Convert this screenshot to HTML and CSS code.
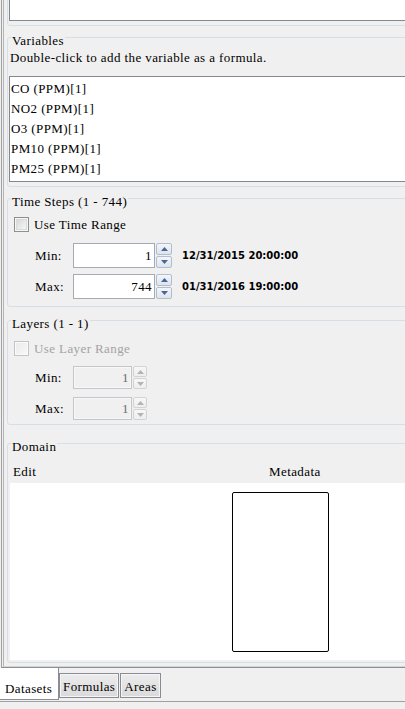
FILE: index.html
```html
<!DOCTYPE html>
<html lang="en">
<head>
<meta charset="utf-8">
<title>Datasets</title>
<link rel="stylesheet" href="styles.css">
</head>
<body>
<div class="window">
  <div class="pane">
    <div class="panel">
      <section class="group group-formula">
        <div class="formula-box"></div>
      </section>

      <section class="group group-vars">
        <div class="group-title">Variables</div>
        <div class="hint">Double-click to add the variable as a formula.</div>
        <ul class="var-list">
          <li>CO (PPM)[1]</li>
          <li>NO2 (PPM)[1]</li>
          <li>O3 (PPM)[1]</li>
          <li>PM10 (PPM)[1]</li>
          <li>PM25 (PPM)[1]</li>
        </ul>
      </section>

      <section class="group group-time">
        <div class="group-title">Time Steps (1 - 744)</div>
        <div class="check-row">
          <span class="checkbox"></span>
          <span class="check-label">Use Time Range</span>
        </div>
        <div class="range-row">
          <span class="range-label">Min:</span>
          <div class="spinner">
            <div class="spin-field">1</div>
            <div class="spin-buttons">
              <span class="spin-btn"><svg width="7" height="4" viewBox="0 0 7 4"><path d="M3.5 0L7 4H0Z"/></svg></span>
              <span class="spin-btn"><svg width="7" height="4" viewBox="0 0 7 4"><path d="M0 0H7L3.5 4Z"/></svg></span>
            </div>
          </div>
          <span class="stamp">12/31/2015 20:00:00</span>
        </div>
        <div class="range-row range-row-next">
          <span class="range-label">Max:</span>
          <div class="spinner">
            <div class="spin-field">744</div>
            <div class="spin-buttons">
              <span class="spin-btn"><svg width="7" height="4" viewBox="0 0 7 4"><path d="M3.5 0L7 4H0Z"/></svg></span>
              <span class="spin-btn"><svg width="7" height="4" viewBox="0 0 7 4"><path d="M0 0H7L3.5 4Z"/></svg></span>
            </div>
          </div>
          <span class="stamp">01/31/2016 19:00:00</span>
        </div>
      </section>

      <section class="group group-layers">
        <div class="group-title">Layers (1 - 1)</div>
        <div class="check-row">
          <span class="checkbox disabled"></span>
          <span class="check-label disabled-text">Use Layer Range</span>
        </div>
        <div class="range-row small">
          <span class="range-label">Min:</span>
          <div class="spinner disabled">
            <div class="spin-field">1</div>
            <div class="spin-buttons">
              <span class="spin-btn"><svg width="7" height="4" viewBox="0 0 7 4"><path d="M3.5 0L7 4H0Z"/></svg></span>
              <span class="spin-btn"><svg width="7" height="4" viewBox="0 0 7 4"><path d="M0 0H7L3.5 4Z"/></svg></span>
            </div>
          </div>
        </div>
        <div class="range-row small range-row-next">
          <span class="range-label">Max:</span>
          <div class="spinner disabled">
            <div class="spin-field">1</div>
            <div class="spin-buttons">
              <span class="spin-btn"><svg width="7" height="4" viewBox="0 0 7 4"><path d="M3.5 0L7 4H0Z"/></svg></span>
              <span class="spin-btn"><svg width="7" height="4" viewBox="0 0 7 4"><path d="M0 0H7L3.5 4Z"/></svg></span>
            </div>
          </div>
        </div>
      </section>

      <section class="group group-domain">
        <div class="group-title">Domain</div>
        <div class="domain-head">
          <span>Edit</span>
          <span>Metadata</span>
        </div>
        <div class="domain-body">
          <div class="meta-box"></div>
        </div>
      </section>
    </div>
  </div>

  <div class="tabs">
    <div class="tab selected">Datasets</div>
    <div class="tab first">Formulas</div>
    <div class="tab">Areas</div>
  </div>
</div>
</body>
</html>
```

FILE: styles.css
```css
* {
  box-sizing: border-box;
}

html,
body {
  margin: 0;
  padding: 0;
}

body {
  width: 405px;
  height: 709px;
  overflow: hidden;
  background: #f0f0f0;
  color: #000;
  font-family: "Liberation Serif", "Times New Roman", serif;
  font-size: 13px;
  line-height: 15px;
  letter-spacing: 0.4px;
}

.window {
  width: 470px;
}

/* tabbed pane content area */
.pane {
  margin-left: 1px;
  padding-left: 1px;
  border-left: 1px solid #a0a0a0;
  border-bottom: 1px solid #8e8f8f;
}

.panel {
  padding: 0 0 3px 3px;
  border-left: 1px solid #b4b4b4;
  border-bottom: 1px solid #d4d4d4;
}

/* group boxes */
.group {
  padding: 0 0 0 1px;
  border: 1px solid #d5dfe5;
  border-radius: 3px;
}

.group-title {
  width: fit-content;
  margin: -5px 0 0 2px;
  padding: 0 1px;
  background: #f0f0f0;
}

.group-formula {
  margin-top: -30px;
  padding-top: 1px;
  padding-bottom: 4px;
}

.formula-box {
  height: 49px;
  background: #fff;
  border: 1px solid #828790;
}

.group-vars {
  margin-top: 11px;
  padding-bottom: 4px;
}

.hint {
  margin-top: 2px;
  padding-left: 1px;
}

.var-list {
  margin: 11px 0 0;
  padding: 2px 0 2px 1px;
  list-style: none;
  background: #fff;
  border: 1px solid #828790;
}

.var-list li {
  line-height: 20px;
  white-space: nowrap;
}

.group-time {
  margin-top: 11px;
  padding-bottom: 7px;
}

.group-layers {
  margin-top: 13px;
  padding-bottom: 4px;
}

.group-domain {
  margin-top: 18px;
  padding-bottom: 2px;
}

/* checkbox rows */
.check-row {
  display: flex;
  align-items: center;
  gap: 5px;
  height: 15px;
  margin-top: 8px;
  padding-left: 5px;
}

.group-layers .check-row {
  margin-top: 10px;
}

.checkbox {
  flex: none;
  width: 15px;
  height: 15px;
  border: 1px solid #8e8f8f;
  background: linear-gradient(135deg, #cfd1d4 0%, #e9eaeb 55%, #fbfbfb 100%);
  box-shadow: inset 0 0 0 1px #f6f6f6, inset 0 0 0 2px #d9dadc;
}

.checkbox.disabled {
  border-color: #c2c4c6;
  background: linear-gradient(135deg, #eaeaea, #f8f8f8);
  box-shadow: inset 0 0 0 1px #fafafa;
}

.disabled-text {
  color: #a3a3a3;
}

/* min / max rows */
.range-row {
  display: flex;
  align-items: center;
  height: 25px;
  margin-top: 11px;
  padding-left: 26px;
}

.range-row.range-row-next {
  margin-top: 6px;
}

.range-row.small {
  height: 23px;
  margin-top: 10px;
}

.range-row.small.range-row-next {
  margin-top: 8px;
}

.range-label {
  flex: none;
  width: 38px;
}

.spinner {
  display: flex;
  height: 100%;
  gap: 1px;
}

.spin-field {
  width: 82px;
  height: 100%;
  padding-right: 2px;
  border: 1px solid #a6abb3;
  background: #fff;
  text-align: right;
  line-height: 23px;
}

.spin-buttons {
  display: flex;
  flex-direction: column;
  gap: 1px;
  width: 16px;
}

.spin-btn {
  flex: 1;
  display: flex;
  align-items: center;
  justify-content: center;
  border: 1px solid #b3bdcb;
  border-radius: 2px;
  background: linear-gradient(#f3f6fa, #dde4ee);
  fill: #4a6597;
}

.spinner.disabled .spin-field {
  width: 59px;
  border-color: #c3c6cb;
  background: #f0f0f0;
  box-shadow: inset 0 0 0 1px #f7f7f7;
  color: #6d6d6d;
  line-height: 21px;
}

.spinner.disabled .spin-buttons {
  width: 14px;
}

.spinner.disabled .spin-btn {
  border-color: #d3d3d3;
  background: linear-gradient(#f7f7f7, #eeeeee);
  fill: #b3b3b3;
}

.stamp {
  margin-left: 10px;
  font-family: "DejaVu Sans", Verdana, sans-serif;
  font-weight: bold;
  font-size: 10px;
  letter-spacing: 0;
  white-space: nowrap;
}

/* domain */
.domain-head {
  display: grid;
  grid-template-columns: 256px auto;
  margin-top: 10px;
  padding-left: 4px;
}

.domain-body {
  height: 177px;
  margin: 4px 0 0 1px;
  padding: 9px 0 0 222px;
  background: #fff;
}

.meta-box {
  width: 97px;
  height: 160px;
  border: 1px solid #000;
  border-radius: 2px;
}

/* tab strip */
.tabs {
  display: flex;
  align-items: flex-start;
  height: 34px;
  border-bottom: 1px solid #a0a0a0;
}

.tab {
  margin: 5px 0 0 1px;
  height: 25px;
  padding: 5px 3px 0 3px;
  border: 1px solid #898c95;
  background: linear-gradient(#ececec, #dadada);
  box-shadow: inset 0 0 0 1px #f5f5f5;
  white-space: nowrap;
}

.tab.first {
  margin-left: 0;
}

.tab.selected {
  width: 59px;
  height: 32px;
  margin: 0;
  padding: 13px 0 0 5px;
  border-width: 0 1px 1px 0;
  background: #fff;
  box-shadow: none;
}
```
